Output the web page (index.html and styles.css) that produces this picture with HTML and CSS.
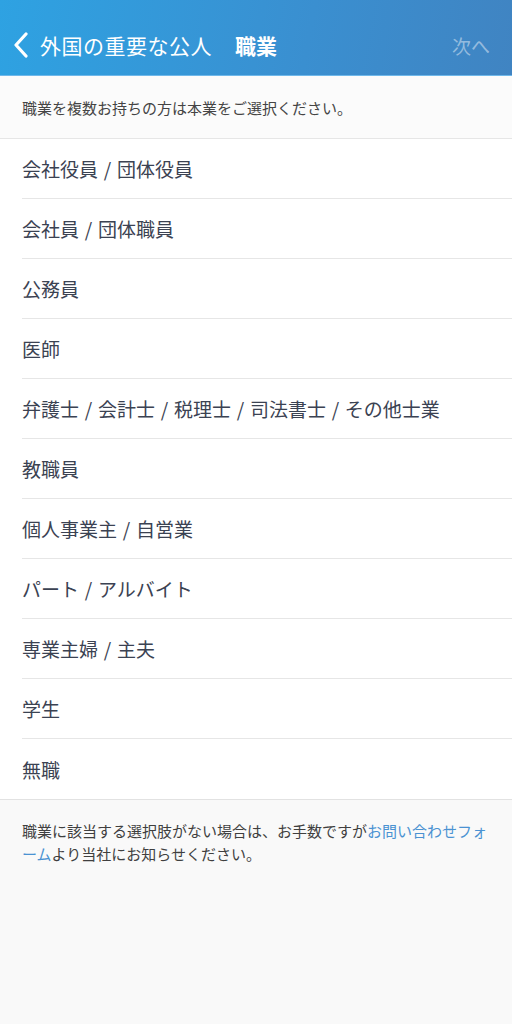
FILE: index.html
```html
<!DOCTYPE html>
<html lang="ja">
<head>
<meta charset="UTF-8" />
<title>職業</title>
<link rel="stylesheet" href="styles.css">
</head>
<body>

<header class="nav">
  <a class="back" href="#">
    <svg class="chevron" width="18" height="26" viewBox="0 0 18 26"><path d="M14 2 L4 13 L14 24" fill="none" stroke="#fff" stroke-width="3.2" stroke-linecap="round" stroke-linejoin="round"/></svg>
    <span class="back-label">外国の重要な公人</span>
  </a>
  <span class="nav-title">職業</span>
  <span class="next">次へ</span>
</header>

<p class="info">職業を複数お持ちの方は本業をご選択ください。</p>

<ul class="jobs">
  <li>会社役員 / 団体役員</li>
  <li>会社員 / 団体職員</li>
  <li>公務員</li>
  <li>医師</li>
  <li>弁護士 / 会計士 / 税理士 / 司法書士 / その他士業</li>
  <li>教職員</li>
  <li>個人事業主 / 自営業</li>
  <li>パート / アルバイト</li>
  <li>専業主婦 / 主夫</li>
  <li>学生</li>
  <li>無職</li>
</ul>

<p class="note">職業に該当する選択肢がない場合は、お手数ですが<a href="#">お問い合わせフォーム</a>より当社にお知らせください。</p>

</body>
</html>
```
FILE: styles.css
```css
body { margin: 0; background: #f9f9f9; font-family: "Noto Sans CJK JP", "Noto Sans", sans-serif; color: #3b4252; }
.nav { height: 60px; padding: 15px 22px 0 12px; display: flex; align-items: center; background: linear-gradient(100deg, #2ea2e2 0%, #3a8fd0 60%, #4084c2 100%); border-bottom: 1px solid #6fb8ea; color: #fff; }
.back { display: flex; align-items: center; color: #fff; text-decoration: none; }
.chevron { margin-right: 10px; }
.back-label { font-size: 21px; letter-spacing: 0.5px; }
.nav-title { margin-left: 23px; font-size: 21px; font-weight: bold; }
.next { margin-left: auto; font-size: 19px; color: rgba(255,255,255,0.45); }
.info { margin: 0; height: 62px; display: flex; align-items: center; padding: 0 22px; font-size: 15px; color: #444; background: #fbfbfb; border-bottom: 1px solid #e6e6e6; }
.jobs { list-style: none; margin: 0; padding: 0 0 0 22px; background: #fff; border-bottom: 1px solid #e2e2e2; }
.jobs li { height: 59px; display: flex; align-items: center; font-size: 19px; word-spacing: 1.5px; border-bottom: 1px solid #e6e6e6; }
.jobs li:last-child { border-bottom: none; height: 60px; }
.note { margin: 0; padding: 19px 22px; font-size: 15px; line-height: 23px; color: #3f3f3f; }
.note a { color: #4a92d2; text-decoration: none; }
```
